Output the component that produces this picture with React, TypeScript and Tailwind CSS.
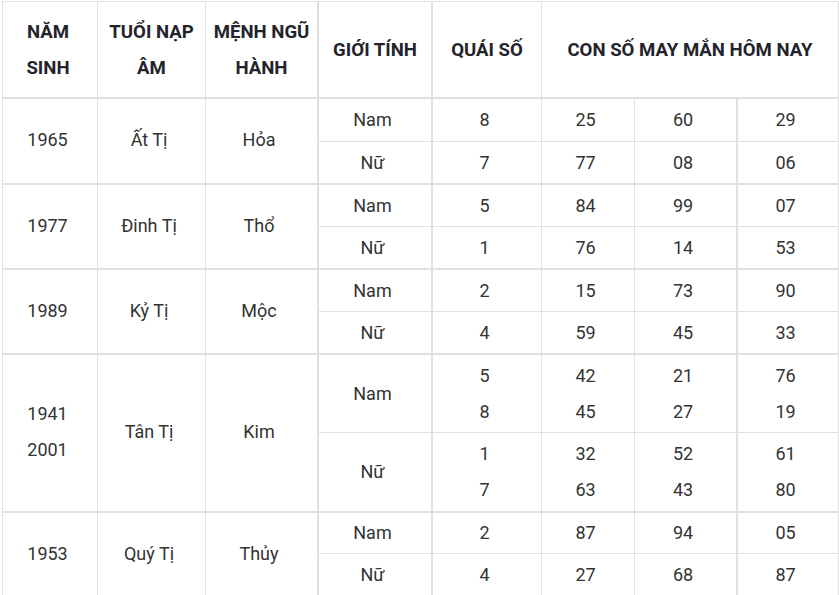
import React from "react";

// One zodiac group: two rows (Nam / Nữ) sharing year, tuổi and mệnh
type Group = {
  years: string[];
  tuoi: string;
  menh: string;
  nam: { quai: string[]; nums: string[][] };
  nu: { quai: string[]; nums: string[][] };
};

const groups: Group[] = [
  {
    years: ["1965"],
    tuoi: "Ất Tị",
    menh: "Hỏa",
    nam: { quai: ["8"], nums: [["25"], ["60"], ["29"]] },
    nu: { quai: ["7"], nums: [["77"], ["08"], ["06"]] },
  },
  {
    years: ["1977"],
    tuoi: "Đinh Tị",
    menh: "Thổ",
    nam: { quai: ["5"], nums: [["84"], ["99"], ["07"]] },
    nu: { quai: ["1"], nums: [["76"], ["14"], ["53"]] },
  },
  {
    years: ["1989"],
    tuoi: "Kỷ Tị",
    menh: "Mộc",
    nam: { quai: ["2"], nums: [["15"], ["73"], ["90"]] },
    nu: { quai: ["4"], nums: [["59"], ["45"], ["33"]] },
  },
  {
    years: ["1941", "2001"],
    tuoi: "Tân Tị",
    menh: "Kim",
    nam: { quai: ["5", "8"], nums: [["42", "45"], ["21", "27"], ["76", "19"]] },
    nu: { quai: ["1", "7"], nums: [["32", "63"], ["52", "43"], ["61", "80"]] },
  },
  {
    years: ["1953"],
    tuoi: "Quý Tị",
    menh: "Thủy",
    nam: { quai: ["2"], nums: [["87"], ["94"], ["05"]] },
    nu: { quai: ["4"], nums: [["27"], ["68"], ["87"]] },
  },
];

// right border per column (cols 3, 4 and 7 are drawn a bit heavier)
const colBorder = [
  "border-r",
  "border-r",
  "border-r-2",
  "border-r-2",
  "border-r",
  "border-r",
  "border-r-2",
  "border-r",
];

const Cell = ({
  col,
  last,
  className = "",
  children,
}: {
  col: number;
  last?: boolean;
  className?: string;
  children: React.ReactNode;
}) => (
  <div
    className={`flex flex-col items-center justify-center text-center border-[#e0e0e0] ${colBorder[col]} ${
      last ? "border-b-2" : "border-b"
    } ${className}`}
  >
    {children}
  </div>
);

const Lines = ({ items }: { items: string[] }) => (
  <>
    {items.map((t, i) => (
      <span key={i}>{t}</span>
    ))}
  </>
);

const head = "font-bold text-[#23232b] text-[18.6px]";

export default function App() {
  return (
    <div className="w-[839px] h-[595px] overflow-hidden bg-white pl-[2px] pt-[1px]">
      <div
        className="grid grid-cols-[95px_108px_113px_114px_109px_93px_103px_101px] grid-rows-[97px_43px_43px_42px_43px_42px_43px_78px_80px_41px_44px] border-l border-t border-[#e0e0e0] text-[18px] leading-[36px] text-[#333]"
        style={{ fontFamily: "Roboto, 'Liberation Sans', sans-serif" }}
      >
        {/* header */}
        <Cell col={0} last className={`${head} pl-1 pr-2`}>
          NĂM SINH
        </Cell>
        <Cell col={1} last className={`${head} px-2`}>
          TUỔI NẠP ÂM
        </Cell>
        <Cell col={2} last className={`${head} px-1`}>
          MỆNH NGŨ HÀNH
        </Cell>
        <Cell col={3} last className={head}>
          GIỚI TÍNH
        </Cell>
        <Cell col={4} last className={head}>
          QUÁI SỐ
        </Cell>
        <Cell col={7} last className={`col-span-3 ${head}`}>
          CON SỐ MAY MẮN HÔM NAY
        </Cell>

        {groups.map((g) => (
          <React.Fragment key={g.years.join("-")}>
            <Cell col={0} last className="row-span-2 pr-[5px] pb-[2px]">
              <Lines items={g.years} />
            </Cell>
            <Cell col={1} last className="row-span-2 pr-[5px] pb-[2px]">
              {g.tuoi}
            </Cell>
            <Cell col={2} last className="row-span-2 pr-[5px] pb-[2px]">
              {g.menh}
            </Cell>

            <Cell col={3} className="pr-[5px]">
              Nam
            </Cell>
            <Cell col={4} className="pr-[5px]">
              <Lines items={g.nam.quai} />
            </Cell>
            {g.nam.nums.map((n, i) => (
              <Cell key={"nam" + i} col={5 + i} className="pr-[5px]">
                <Lines items={n} />
              </Cell>
            ))}

            <Cell col={3} last className="pr-[5px]">
              Nữ
            </Cell>
            <Cell col={4} last className="pr-[5px]">
              <Lines items={g.nu.quai} />
            </Cell>
            {g.nu.nums.map((n, i) => (
              <Cell key={"nu" + i} col={5 + i} last className="pr-[5px]">
                <Lines items={n} />
              </Cell>
            ))}
          </React.Fragment>
        ))}
      </div>
    </div>
  );
}
